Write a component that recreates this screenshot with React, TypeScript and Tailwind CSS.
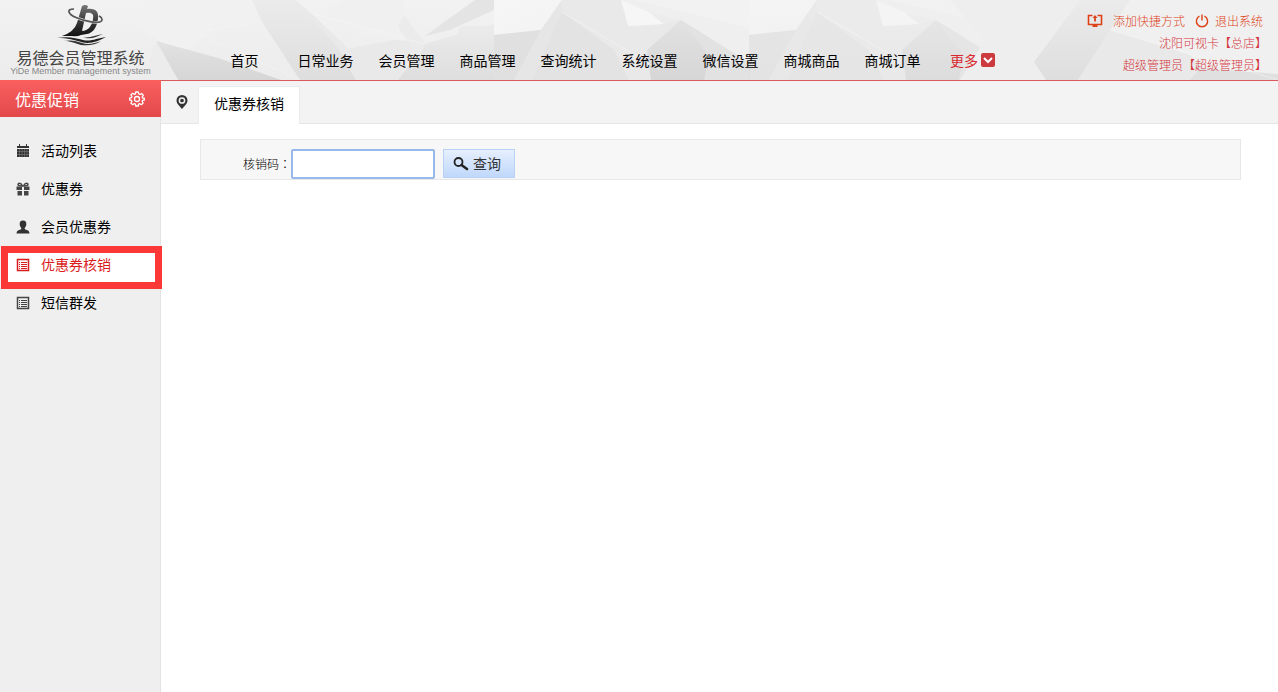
import type { ReactNode } from "react";

const NAV = ["首页", "日常业务", "会员管理", "商品管理", "查询统计", "系统设置", "微信设置", "商城商品", "商城订单"];

function HeaderBackdrop() {
  return (
    <svg
      aria-hidden="true"
      className="absolute inset-0 h-full w-full"
      viewBox="0 0 1278 80"
      preserveAspectRatio="xMinYMin slice"
    >
      <defs>
        <linearGradient id="base" x1="0" y1="0" x2="0" y2="1">
          <stop offset="0" stopColor="#f2f2f2" />
          <stop offset="1" stopColor="#ececec" />
        </linearGradient>
        <linearGradient id="dark" x1="0" y1="0" x2="0" y2="1">
          <stop offset="0" stopColor="#e2e2e2" />
          <stop offset="1" stopColor="#d6d6d6" />
        </linearGradient>
        <linearGradient id="soft" x1="0" y1="0" x2="0" y2="1">
          <stop offset="0" stopColor="#ebebeb" />
          <stop offset="1" stopColor="#dedede" />
        </linearGradient>
        <linearGradient id="bright" x1="0" y1="0" x2="1" y2="1">
          <stop offset="0" stopColor="#f6f6f6" />
          <stop offset="1" stopColor="#f3f3f3" />
        </linearGradient>
        <g id="facets">
          <path d="M0 0H256V80H0Z" fill="#ececec" />
          <path d="M0 0H68L47 30L0 35Z" fill="url(#bright)" />
          <path d="M68 0H127L140 27L170 24L187 20L157 80H90L68 12Z" fill="#e9e9e9" />
          <path d="M68 0V12L40 80H20L47 30Z" fill="#e6e6e6" />
          <path d="M0 35L47 30L20 80H0Z" fill="#e0e0e0" />
          <path d="M68 12L120 50L135 80H38Z" fill="#e3e3e3" />
          <path d="M127 0L134 26L170 24L155 12Z" fill="#f6f6f6" />
          <path d="M187 20L153 50L157 80H256V64Z" fill="url(#dark)" />
          <path d="M187 20L215 56L210 80H256V64Z" fill="#e2e2e2" />
          <path d="M127 0H256V62L187 20L160 14Z" fill="#efefef" />
          <path d="M140 0L256 28V0Z" fill="#f2f2f2" />
        </g>
      </defs>
      <rect width="1278" height="80" fill="url(#base)" />
      <path d="M150 0L135 25L180 55L252 0Z" fill="#f1f1f1" />
      <path d="M156 41L218 58L281 80H178Z" fill="url(#dark)" />
      <path d="M156 41L178 80H160L150 60Z" fill="#ececec" />
      <path d="M252 0H296L340 50L356 80H300L262 22Z" fill="url(#soft)" />
      <path d="M296 0L314 16L350 50L340 50Z" fill="#e9e9e9" />
      <path d="M340 50L418 36L400 80H356Z" fill="#e9e9e9" />
      <path d="M314 14L345 0H404V15L425 44L360 34Z" fill="#f0f0f0" />
      <path d="M425 44L494 24V80H398Z" fill="url(#soft)" />
      <path d="M460 26H494V80H440Z" fill="url(#soft)" />
      <path d="M425 36L475 0H494V10L450 30Z" fill="#e4e4e4" />
      <path d="M404 15L425 44L418 60L398 26Z" fill="#ebebeb" />
      <use href="#facets" x="494" />
      <use href="#facets" x="749" opacity=".7" />
      <path d="M950 0H1090L1034 62L1050 80H960L985 40Z" fill="#eeeeee" />
      <path d="M1080 0H1130L1078 80H1046L1034 62Z" fill="url(#soft)" />
      <path d="M1130 0H1278V80H1190L1110 30Z" fill="#f0f0f0" />
      <path d="M1110 30L1190 55L1215 80H1078Z" fill="#e9e9e9" />
      <path d="M1200 68L1278 74V80H1190Z" fill="#e0e0e0" />
      <path
        d="M195 32L300 80M262 22L195 32M425 44L314 14M562 12L660 70M817 12L900 60M1110 30L1278 80"
        stroke="#f7f7f7"
        strokeOpacity=".5"
        fill="none"
      />
    </svg>
  );
}

function Logo() {
  return (
    <a href="#home" className="flex w-[161px] shrink-0 flex-col items-center pt-1">
      <svg aria-hidden="true" width="54" height="42" viewBox="0 0 54 42">
        <defs>
          <linearGradient id="ink" x1="0" y1="0" x2="0" y2="1">
            <stop offset="0" stopColor="#777" />
            <stop offset=".5" stopColor="#3a3a3a" />
            <stop offset="1" stopColor="#111" />
          </linearGradient>
        </defs>
        <path
          fillRule="evenodd"
          d="M28 2Q31 0 34 2L33 5C42 4 45 8 44 15C43 23 39 29 33 30L27 31Q23 33 18 32L8 32Q20 28 23 19ZM32 9L28 27C34 27 38 22 39 15C40 10 38 8 32 9Z"
          fill="url(#ink)"
        />
        <path d="M20 5C12 5 14 10 22 13.500C31 17.500 45 20 47.500 17C49 15 47 13 45 12" fill="none" stroke="#eee" strokeWidth="3" />
        <path d="M20 5C12 5 14 10 22 13.500C31 17.500 45 20 47.500 17C49 15 47 13 45 12" fill="none" stroke="#555" strokeWidth="1.700" />
        <path d="M3 34C14 32 22 34 29 36C37 38 43 34 52 33C45 37 37 40 29 38.500C20 36 14 34 3 34Z" fill="#222" />
        <path d="M10 37C17 35.500 22 37 28 39C34 41 41 39.500 47 37C42 41 34 42 27 41C20 39 16 37 10 37Z" fill="#333" />
        <path d="M28 33C35 35 41 31 49 30C42 33 36 36 28 33Z" fill="#333" />
      </svg>
      <span className="text-[16px] leading-[22px] text-[#444]">易德会员管理系统</span>
      <span className="-mt-[3px] whitespace-nowrap font-['Liberation_Sans',sans-serif] text-[9px] leading-[12px] text-[#888]">
        YiDe Member management system
      </span>
    </a>
  );
}

const CalendarIcon = () => (
  <svg aria-hidden="true" width="14" height="14" viewBox="0 0 14 14">
    <path d="M1 2H3V0H4V2H10V0H11V2H13V4H1ZM1 5H13V13H1Z" fill="#333" />
    <path d="M1 7.500H13M1 10.500H13M3.500 5V13M6 5V13M8.500 5V13M11 5V13" stroke="#999" strokeWidth=".4" />
  </svg>
);

const GiftIcon = () => (
  <svg aria-hidden="true" width="14" height="14" viewBox="0 0 14 14">
    <path d="M.5 4.500H6V8H.5ZM8 4.500H13.500V8H8ZM1.500 9H6V13.500H1.500ZM8 9H12.500V13.500H8Z" fill="#444" />
    <path d="M6.500 4C5 0 2 1 2 2.500S4 4 6.500 4ZM7.500 4C9 0 12 1 12 2.500S10 4 7.500 4Z" fill="none" stroke="#444" strokeWidth="1.500" />
  </svg>
);

const UserIcon = () => (
  <svg aria-hidden="true" width="14" height="14" viewBox="0 0 14 14">
    <path
      d="M7 0.500C9.500 0.500 10.500 2 10.300 4.500C10.200 6 9.500 7.200 8.700 8C8.500 9 9 9.300 10 9.700C12.500 10.500 13.300 11 13.500 13.500H.5C.7 11 1.500 10.500 4 9.700C5 9.300 5.500 9 5.300 8C4.500 7.200 3.800 6 3.700 4.500C3.500 2 4.500 .5 7 .5Z"
      fill="#333"
    />
  </svg>
);

const ListIcon = () => (
  <svg aria-hidden="true" width="14" height="14" viewBox="0 0 14 14" fill="none" stroke="currentColor">
    <path d="M1.500 1.500H12.500V12.500H1.500Z" strokeWidth="1.500" />
    <path d="M3 4.500H4M3 6.500H4M3 8.500H4M3 10.500H4M5 4.500H11M5 6.500H11M5 8.500H11M5 10.500H11" />
  </svg>
);

const GearIcon = () => (
  <svg aria-hidden="true" width="16" height="16" viewBox="0 0 16 16" fill="none" stroke="#fff" strokeWidth="1.300">
    <path
      d="M6.700 1H9.300L9.700 2.900L11 3.500L12.600 2.500L14.300 4.300L13.200 5.900L13.600 7L15.300 7.200V9L13.600 9.300L13.100 10.500L14.100 12L12.300 13.700L10.800 12.700L9.600 13.200L9.200 15H6.800L6.400 13.200L5.200 12.700L3.700 13.700L1.900 12L2.900 10.500L2.400 9.300L.7 9V7L2.400 6.700L2.900 5.500L1.900 4L3.700 2.300L5.200 3.300L6.400 2.800Z"
      strokeLinejoin="round"
    />
    <circle cx="8" cy="8" r="2.500" />
  </svg>
);

function SideItem({ icon, label }: { icon: ReactNode; label: string }) {
  return (
    <li>
      <a href="#item" className="flex h-[38px] items-center gap-[11px] pl-4 text-sm text-black">
        <span className="text-[#444]">{icon}</span>
        <span className="pb-0.5">{label}</span>
      </a>
    </li>
  );
}

export default function App() {
  return (
    <div className="flex min-h-screen flex-col bg-white font-['Noto_Sans_CJK_SC',sans-serif] font-normal" lang="zh-CN">
      <header className="relative h-20">
        <HeaderBackdrop />
        <div className="relative flex h-full">
          <Logo />
          <nav className="flex items-end pb-[9px] pl-[43px] text-sm leading-[22px] text-black">
            {NAV.map((label) => (
              <a key={label} href="#nav" className="w-[81px] text-center">
                {label}
              </a>
            ))}
            <button type="button" className="ml-[17px] flex items-center gap-[3px] text-[#d9292f]">
              更多
              <svg aria-hidden="true" width="14" height="14" viewBox="0 0 14 14">
                <rect width="14" height="14" rx="2" fill="#cc3a40" />
                <path d="M3 5L7 9L11 5" fill="none" stroke="#fff" strokeWidth="2" />
              </svg>
            </button>
          </nav>
          <div className="ml-auto flex flex-col items-end pt-[10px] pr-[11px] text-xs leading-[22px] font-light text-[#d5373e]">
            <div className="flex items-center pr-1 text-[#dd4216]">
              <svg aria-hidden="true" width="16" height="14" viewBox="0 0 16 14" fill="none" stroke="currentColor" className="mr-[10px]">
                <path d="M5.500 1.500H1.500V10.500H14.500V1.500H10.500" strokeWidth="1.600" />
                <path d="M8 7.500V3M5.500 12H10.500" strokeWidth="1.800" />
                <path d="M5.500 4L8 1L10.500 4Z" fill="currentColor" stroke="none" />
              </svg>
              <a href="#shortcut">添加快捷方式</a>
              <svg aria-hidden="true" width="14" height="14" viewBox="0 0 14 14" fill="none" stroke="currentColor" strokeWidth="1.400" className="mr-[6px] ml-[10px]">
                <path d="M4.500 2.200A5.600 5.600 0 1 0 9.500 2.200M7 .5V6.500" />
              </svg>
              <a href="#logout">退出系统</a>
            </div>
            <span>沈阳可视卡【总店】</span>
            <span>超级管理员【超级管理员】</span>
          </div>
        </div>
      </header>

      <div className="flex flex-1">
        <aside className="w-[161px] shrink-0 border-r border-[#e3e3e3] bg-[#efefef]">
          <div className="-mr-px flex h-[37px] items-center justify-between bg-linear-to-b from-[#fb605f] to-[#e2484a] pr-4 pl-[15px] text-white">
            <h2 className="text-base font-normal">优惠促销</h2>
            <button type="button" aria-label="设置">
              <GearIcon />
            </button>
          </div>
          <ul className="pt-[15px]">
            <SideItem icon={<CalendarIcon />} label="活动列表" />
            <SideItem icon={<GiftIcon />} label="优惠券" />
            <SideItem icon={<UserIcon />} label="会员优惠券" />
            <li className="relative h-[38px]">
              <a
                href="#verify"
                aria-current="page"
                className="absolute top-0 left-px flex h-[43px] w-[161px] items-center gap-[11px] border-7 border-[#fc3737] bg-white pb-[5px] pl-2 text-sm text-[#d91c1c]"
              >
                <ListIcon />
                <span className="pb-0.5">优惠券核销</span>
              </a>
            </li>
            <SideItem icon={<ListIcon />} label="短信群发" />
          </ul>
        </aside>

        <main className="min-w-0 flex-1 border-t border-[#d9595d]">
          <div className="flex h-[43px] border-b border-[#e6e6e6] bg-[#f3f3f3]">
            <div className="flex w-[37px] items-center pl-[15px]">
              <svg aria-hidden="true" width="12" height="14" viewBox="0 0 12 14">
                <path d="M6 0A5.500 5.500 0 0 1 11.500 5.500C11.500 8.500 8.500 11 6 14C3.500 11 .5 8.500 .5 5.500A5.500 5.500 0 0 1 6 0Z" fill="#333" />
                <circle cx="6" cy="5.500" r="2.600" fill="none" stroke="#f3f3f3" strokeWidth="1.500" />
              </svg>
            </div>
            <a
              href="#tab"
              className="-mb-px mt-[5px] flex w-[102px] items-center justify-center border-x border-t border-[#ebebeb] bg-white pb-1.5 text-sm text-black"
            >
              优惠券核销
            </a>
          </div>
          <form
            className="mt-[15px] mr-[37px] ml-[39px] flex h-[41px] items-center border border-[#e8e8e8] bg-[#f7f7f7] pt-2 pl-[42px]"
            onSubmit={(event) => event.preventDefault()}
          >
            <label htmlFor="code" className="text-xs font-light text-black">
              核销码<span className="font-['Noto_Sans_CJK_TC',sans-serif]" lang="zh-TW">：</span>
            </label>
            <input id="code" type="text" className="h-[30px] w-36 rounded-xs border-2 border-[#99b9ec] bg-white px-2 text-sm outline-none" />
            <button
              type="submit"
              className="ml-2 flex h-[29px] w-[72px] items-center gap-1 border border-[#b9d0f7] bg-linear-to-b from-[#e6effd] to-[#c0d8fc] pl-[9px] text-sm text-[#333]"
            >
              <svg aria-hidden="true" width="16" height="14" viewBox="0 0 16 14" fill="none" stroke="#222">
                <circle cx="5.500" cy="5" r="4" strokeWidth="1.800" />
                <path d="M8.500 8L14 12" strokeWidth="2.600" strokeLinecap="round" />
              </svg>
              <span className="pb-0.5">查询</span>
            </button>
          </form>
        </main>
      </div>
    </div>
  );
}
